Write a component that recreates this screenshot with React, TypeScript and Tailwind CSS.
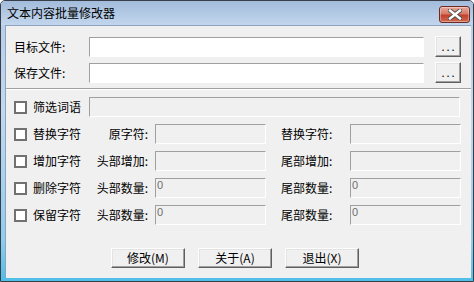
import React from "react";

const sunken =
  "border border-t-[#a0a0a0] border-l-[#a0a0a0] border-r-white border-b-white";
const raised =
  "border border-t-[#fdfdfd] border-l-[#fdfdfd] border-r-[#5f5f5f] border-b-[#5f5f5f] shadow-[inset_-1px_-1px_0_#a0a0a0,inset_1px_1px_0_#e3e3e3] bg-[#f0f0f0]";

function CheckBox() {
  return <div className="w-[13px] h-[13px] border-2 border-[#717171] bg-white shrink-0" />;
}

function Check({ label }: { label: string }) {
  return (
    <div className="flex items-center gap-[6px] w-[81px]">
      <CheckBox />
      <span className="text-[12px] leading-none whitespace-nowrap">{label}</span>
    </div>
  );
}

function DisabledBox({ value, w }: { value?: string; w: string }) {
  return (
    <div className={`${sunken} ${w} h-[20px] bg-[#f0f0f0] flex items-start`}>
      {value !== undefined && (
        <span className="font-['Liberation_Sans',sans-serif] text-[11px] leading-none text-[#6d6d6d] pl-[1px] pt-[1px]">
          {value}
        </span>
      )}
    </div>
  );
}

function OptRow({
  check,
  left,
  right,
  value,
}: {
  check: string;
  left: string;
  right: string;
  value?: string;
}) {
  return (
    <div className="flex items-center h-[20px]">
      <Check label={check} />
      <div className="w-[60px] text-right pr-[7px] text-[12px] leading-none whitespace-nowrap">{left}</div>
      <DisabledBox value={value} w="w-[111px]" />
      <div className="w-[15px]" />
      <div className="w-[69px] text-[12px] leading-none whitespace-nowrap">{right}</div>
      <DisabledBox value={value} w="w-[111px]" />
    </div>
  );
}

function Btn({ children }: { children: React.ReactNode }) {
  return (
    <div className={`${raised} w-[74px] h-[20px] flex items-center justify-center text-[12px] leading-none`}>
      {children}
    </div>
  );
}

export default function App() {
  return (
    <div className="w-[474px] h-[282px] flex flex-col border border-[#383e48] rounded-t-[5px] overflow-hidden bg-[linear-gradient(to_bottom,#b6cde8_0%,#c3d7ed_40%,#8fcdee_85%,#4fbfe8_100%)] font-['Noto_Sans_CJK_SC',sans-serif] text-black">
      {/* Title bar */}
      <div className="h-[24px] shrink-0 flex items-center justify-between pl-[6px] pr-[3px] bg-[linear-gradient(to_bottom,#a3bcdb,#c2d6ed)]">
        <span className="text-[12px] leading-none">文本内容批量修改器</span>
        <div className="w-[31px] h-[17px] mt-[3px] rounded-[3px] border border-[#6b2a24] bg-[linear-gradient(to_bottom,#e7a99d_0%,#d57a68_45%,#c2402f_55%,#cf6a4f_100%)] flex items-center justify-center shadow-[inset_0_0_0_1px_rgba(255,255,255,0.35)]">
          <svg width="14" height="11" viewBox="0 0 14 11">
            <path d="M2 1.5 L12 9.5 M12 1.5 L2 9.5" stroke="#4a4a4a" strokeWidth="4.2" strokeLinecap="square" />
            <path d="M2 1.5 L12 9.5 M12 1.5 L2 9.5" stroke="#ffffff" strokeWidth="2.4" strokeLinecap="square" />
          </svg>
        </div>
      </div>
      {/* Content */}
      <div className="flex-1 ml-[4px] mr-[2px] mb-[3px] border-l border-t border-[#8da3bf] bg-[#f0f0f0] flex flex-col">
        <div className="pl-[8px] pt-[10px] flex flex-col gap-[5px]">
          <div className="flex items-center h-[21px]">
            <div className="w-[75px] text-[12px] leading-none">目标文件:</div>
            <div className={`${sunken} w-[335px] h-[20px] bg-white`} />
            <div className="w-[11px]" />
            <div className={`${raised} w-[26px] h-[21px] flex items-center justify-center text-[11px] leading-none tracking-[2px] pl-[2px]`}>
              ...
            </div>
          </div>
          <div className="flex items-center h-[21px]">
            <div className="w-[75px] text-[12px] leading-none">保存文件:</div>
            <div className={`${sunken} w-[335px] h-[20px] bg-white`} />
            <div className="w-[11px]" />
            <div className={`${raised} w-[26px] h-[21px] flex items-center justify-center text-[11px] leading-none tracking-[2px] pl-[2px]`}>
              ...
            </div>
          </div>
        </div>
        <div className="mt-[5px] h-[2px] border-t border-[#a0a0a0] border-b border-b-white" />
        <div className="pl-[8px] pt-[7px] flex flex-col gap-[7px]">
          <div className="flex items-center h-[20px]">
            <div className="w-[75px] flex items-center gap-[6px]">
              <CheckBox />
              <span className="text-[12px] leading-none">筛选词语</span>
            </div>
            <DisabledBox w="w-[371px]" />
          </div>
          <OptRow check="替换字符" left="原字符:" right="替换字符:" />
          <OptRow check="增加字符" left="头部增加:" right="尾部增加:" />
          <OptRow check="删除字符" left="头部数量:" right="尾部数量:" value="0" />
          <OptRow check="保留字符" left="头部数量:" right="尾部数量:" value="0" />
        </div>
        <div className="mt-[23px] pl-[105px] flex gap-[13px]">
          <Btn>修改(M)</Btn>
          <Btn>关于(A)</Btn>
          <Btn>退出(X)</Btn>
        </div>
      </div>
    </div>
  );
}
